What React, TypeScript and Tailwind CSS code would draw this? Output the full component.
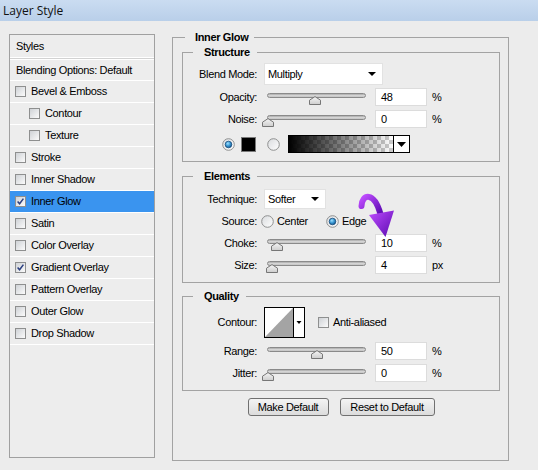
import React from "react";

function Check({ checked }: { checked?: boolean }) {
  return (
    <span className="block w-[11px] h-[11px] shrink-0 border border-[#8e8f8f] bg-gradient-to-br from-[#cfd2d6] to-[#fbfbfb]">
      {checked && (
        <svg width="9" height="9" viewBox="0 0 9 9" className="block">
          <path d="M1.6 4.4 L3.6 6.8 L7.4 1.6" fill="none" stroke="#2c3f80" strokeWidth="1.5" />
        </svg>
      )}
    </span>
  );
}

function Radio({ on }: { on?: boolean }) {
  const id = on ? "rOn" : "rOff";
  return (
    <svg width="13" height="13" viewBox="0 0 13 13" className="block shrink-0">
      <defs>
        <linearGradient id={id + "bg"} x1="0" y1="0" x2="1" y2="1">
          <stop offset="0" stopColor="#d9dbde" />
          <stop offset="1" stopColor="#ffffff" />
        </linearGradient>
        <radialGradient id={id + "dot"} cx="0.4" cy="0.35" r="0.7">
          <stop offset="0" stopColor="#9fe0ff" />
          <stop offset="0.5" stopColor="#3c9ad4" />
          <stop offset="1" stopColor="#0f4f86" />
        </radialGradient>
      </defs>
      <circle cx="6.5" cy="6.5" r="5.8" fill={`url(#${id}bg)`} stroke="#8e8f8f" strokeWidth="1" />
      {on && <circle cx="6.5" cy="6.5" r="3.3" fill={`url(#${id}dot)`} stroke="#1b4e7e" strokeWidth="0.8" />}
    </svg>
  );
}

function DownTri({ w = 8, h = 4 }: { w?: number; h?: number }) {
  return (
    <svg width={w} height={h} viewBox={`0 0 ${w} ${h}`} className="block shrink-0">
      <polygon points={`0,0 ${w},0 ${w / 2},${h}`} fill="#000" />
    </svg>
  );
}

function Slider({ pct }: { pct: number }) {
  return (
    <div className="relative w-[99px] h-[22px] shrink-0">
      <div className="absolute left-0 right-0 top-[7px] h-[5px] rounded-full border border-[#8a8a8a] bg-gradient-to-b from-[#a9a9a9] via-[#d4d4d4] to-[#c4c4c4]" />
      <svg
        className="absolute top-[10px]"
        style={{ left: (pct / 100) * 99 - 5.5 }}
        width="12"
        height="9"
        viewBox="0 0 12 9"
      >
        <defs>
          <linearGradient id="thumbg" x1="0" y1="0" x2="0" y2="1">
            <stop offset="0" stopColor="#f6f6f6" />
            <stop offset="1" stopColor="#cdcdcd" />
          </linearGradient>
        </defs>
        <path d="M0.5 4.2 L6 0.6 L11.5 4.2 L11.5 8.5 L0.5 8.5 Z" fill="url(#thumbg)" stroke="#767676" strokeWidth="1" />
      </svg>
    </div>
  );
}

function NumBox({ v }: { v: string }) {
  return (
    <div className="w-[52px] h-[18px] shrink-0 bg-white border border-[#dcdcdc] pl-[5px] flex items-center">
      {v}
    </div>
  );
}

function Label({ children }: { children: React.ReactNode }) {
  return <div className="w-[74px] shrink-0 text-right">{children}</div>;
}

function SliderRow({ label, pct, v, unit }: { label: string; pct: number; v: string; unit: string }) {
  return (
    <div className="flex items-center h-[22px]">
      <Label>{label}</Label>
      <div className="ml-[10px]">
        <Slider pct={pct} />
      </div>
      <div className="ml-[9px]">
        <NumBox v={v} />
      </div>
      <div className="ml-[5px]">{unit}</div>
    </div>
  );
}

function Group({ title, children, className = "" }: { title: string; children: React.ReactNode; className?: string }) {
  return (
    <fieldset className={`m-0 p-0 min-w-0 w-[318px] border border-[#a3a3a3] ${className}`}>
      <legend className="ml-[10px] pl-[11px] pr-[7px] font-bold leading-[14px]">{title}</legend>
      {children}
    </fieldset>
  );
}

const items: { label: string; sub?: boolean; checked?: boolean; selected?: boolean }[] = [
  { label: "Bevel & Emboss" },
  { label: "Contour", sub: true },
  { label: "Texture", sub: true },
  { label: "Stroke" },
  { label: "Inner Shadow" },
  { label: "Inner Glow", checked: true, selected: true },
  { label: "Satin" },
  { label: "Color Overlay" },
  { label: "Gradient Overlay", checked: true },
  { label: "Pattern Overlay" },
  { label: "Outer Glow" },
  { label: "Drop Shadow" },
];

export default function App() {
  return (
    <div className="relative w-[538px] h-[470px] overflow-hidden bg-[#ececec] text-black text-[11px] leading-[13px] tracking-[-0.35px] font-['Liberation_Sans',Arial,sans-serif]">
      {/* title bar */}
      <div className="h-[21px] flex items-center pl-[3px] bg-gradient-to-b from-[#cadcf1] to-[#b9cfe9] text-[12px] tracking-normal font-['Open_Sans',sans-serif] text-[#111]">
        Layer Style
      </div>

      <div className="flex items-start pt-[9px] pl-[9px]">
        {/* left list */}
        <div className="mt-[4px] w-[146px] h-[424px] border border-[#a0a0a0] bg-[#ededed] shrink-0">
          <div className="h-[22px] flex items-center pl-[6px]">Styles</div>
          <div className="h-px bg-white" />
          <div className="h-px bg-[#d2d2d2]" />
          <div className="h-px bg-white" />
          <div className="h-[20px] flex items-center pl-[6px]">Blending Options: Default</div>
          <div className="h-px bg-white" />
          {items.map((it) => (
            <div key={it.label}>
              <div
                className={`h-[21px] flex items-center gap-[5px] ${it.sub ? "pl-[19px]" : "pl-[5px]"} ${
                  it.selected ? "bg-[#3a94ef]" : ""
                }`}
              >
                <Check checked={it.checked} />
                <span>{it.label}</span>
              </div>
              <div className="h-px bg-white" />
            </div>
          ))}
        </div>

        {/* right panel */}
        <fieldset className="m-0 p-0 min-w-0 ml-[17px] w-[337px] h-[431px] border border-[#a3a3a3] shrink-0">
          <legend className="ml-[12px] pl-[10px] pr-[6px] font-bold leading-[14px]">Inner Glow</legend>
          <div className="pl-[9px] pt-[1px]">
            <Group title="Structure" className="pb-[8px]">
              <div className="mt-[4px] flex items-center h-[22px]">
                <Label>Blend Mode:</Label>
                <div className="ml-[7px] w-[119px] h-[22px] bg-white border border-[#e2e2e2] flex items-center justify-between pl-[3px] pr-[6px]">
                  <span>Multiply</span>
                  <DownTri w={8} h={4} />
                </div>
              </div>
              <div className="mt-[1px]">
                <SliderRow label="Opacity:" pct={48} v="48" unit="%" />
              </div>
              <SliderRow label="Noise:" pct={0} v="0" unit="%" />
              <div className="mt-[5px] h-[18px] flex items-center">
                <div className="ml-[39px]">
                  <Radio on />
                </div>
                <div className="ml-[6px] w-[15px] h-[15px] bg-black border border-[#7a7a7a]" />
                <div className="ml-[11px]">
                  <Radio />
                </div>
                <div className="ml-[8px] flex h-[18px] border border-black">
                  <svg width="104" height="16" viewBox="0 0 104 16" className="block">
                    <defs>
                      <pattern id="chk" width="8" height="8" patternUnits="userSpaceOnUse">
                        <rect width="8" height="8" fill="#ffffff" />
                        <rect width="4" height="4" fill="#cccccc" />
                        <rect x="4" y="4" width="4" height="4" fill="#cccccc" />
                      </pattern>
                      <linearGradient id="fade" x1="0" y1="0" x2="1" y2="0">
                        <stop offset="0" stopColor="#000" stopOpacity="1" />
                        <stop offset="1" stopColor="#000" stopOpacity="0" />
                      </linearGradient>
                    </defs>
                    <rect width="104" height="16" fill="url(#chk)" />
                    <rect width="104" height="16" fill="url(#fade)" />
                  </svg>
                  <div className="w-[16px] h-[16px] border-l border-black bg-white flex items-center justify-center">
                    <DownTri w={9} h={5} />
                  </div>
                </div>
              </div>
            </Group>

            <Group title="Elements" className="mt-[7px] pb-[6px]">
              <div className="mt-[5px] flex items-center h-[22px]">
                <Label>Technique:</Label>
                <div className="ml-[7px] w-[62px] h-[20px] bg-white border border-[#e2e2e2] flex items-center justify-between pl-[3px] pr-[6px]">
                  <span>Softer</span>
                  <DownTri w={8} h={4} />
                </div>
              </div>
              <div className="flex items-center h-[22px]">
                <Label>Source:</Label>
                <div className="ml-[4px]">
                  <Radio />
                </div>
                <span className="ml-[3px]">Center</span>
                <div className="ml-[18px]">
                  <Radio on />
                </div>
                <span className="ml-[3px]">Edge</span>
              </div>
              <SliderRow label="Choke:" pct={10} v="10" unit="%" />
              <SliderRow label="Size:" pct={4.5} v="4" unit="px" />
            </Group>

            <Group title="Quality" className="mt-[6px] pb-[6px]">
              <div className="mt-[4px] flex items-center h-[31px]">
                <Label>Contour:</Label>
                <svg width="41" height="31" viewBox="0 0 41 31" className="block ml-[7px] shrink-0">
                  <rect x="0.5" y="0.5" width="40" height="30" fill="#fff" stroke="#000" />
                  <polygon points="1,30 29,1 29,30" fill="#a4a4a4" />
                  <line x1="29.5" y1="0.5" x2="29.5" y2="30.5" stroke="#000" />
                  <polygon points="32.5,14 37.5,14 35,17" fill="#000" />
                </svg>
                <div className="ml-[13px]">
                  <Check />
                </div>
                <span className="ml-[4px]">Anti-aliased</span>
              </div>
              <div className="mt-[2px]">
                <SliderRow label="Range:" pct={50} v="50" unit="%" />
              </div>
              <SliderRow label="Jitter:" pct={0} v="0" unit="%" />
            </Group>

            <div className="w-[318px] mt-[7px] flex justify-center gap-[11px]">
              <button className="w-[81px] h-[18px] rounded-[3px] border border-[#707070] bg-gradient-to-b from-[#f4f4f4] to-[#dcdcdc] flex items-center justify-center">
                Make Default
              </button>
              <button className="w-[95px] h-[18px] rounded-[3px] border border-[#707070] bg-gradient-to-b from-[#f4f4f4] to-[#dcdcdc] flex items-center justify-center">
                Reset to Default
              </button>
            </div>
          </div>
        </fieldset>
      </div>

      {/* purple annotation arrow */}
      <svg className="absolute left-[355px] top-[188px]" width="45" height="52" viewBox="355 188 45 52">
        <defs>
          <linearGradient id="purp" x1="0" y1="0" x2="1" y2="1">
            <stop offset="0" stopColor="#c04dff" />
            <stop offset="1" stopColor="#5a0ab0" />
          </linearGradient>
        </defs>
        <path d="M361.5 206 C362 194 374 191 380.5 214" fill="none" stroke="url(#purp)" strokeWidth="6" strokeLinecap="round" />
        <polygon points="369,215 394,210.5 385.5,237" fill="url(#purp)" />
      </svg>
    </div>
  );
}
